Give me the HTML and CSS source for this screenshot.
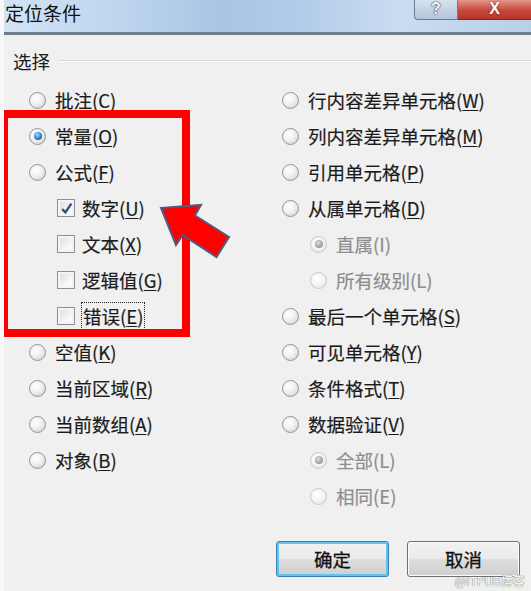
FILE: index.html
```html
<html>
    <head>
        <meta charset="UTF-8" name="viewport" content="width=device-width, initial-scale=1.0">
        <link rel="stylesheet" href="styles.css">
    </head>
    <body>
        <div class="dialog">
            <div class="tittel">
                <span class="tittel-tekst">定位条件</span>
                <div class="vindu-knapper">
                    <span class="hjelp">?</span>
                    <span class="lukk">X</span>
                </div>
            </div>

            <div class="gruppe">
                <div class="gruppe-navn"><span>选择</span></div>

                <div class="kolonner">
                    <div class="kolonne">
                        <div class="rad"><span class="radio"></span>批注(<u>C</u>)</div>
                        <div class="rad"><span class="radio valgt"></span>常量(<u>O</u>)</div>
                        <div class="rad"><span class="radio"></span>公式(<u>F</u>)</div>
                        <div class="rad under"><span class="boks">
                            <svg width="13" height="13" viewBox="0 0 12 12"><path d="M2 6.5 L5 9.5 L10.5 1.5" fill="none" stroke="#3b4f87" stroke-width="2.2"/></svg>
                        </span>数字(<u>U</u>)</div>
                        <div class="rad under"><span class="boks"></span>文本(<u>X</u>)</div>
                        <div class="rad under"><span class="boks"></span>逻辑值(<u>G</u>)</div>
                        <div class="rad under"><span class="boks"></span><span class="fokus">错误(<u>E</u>)</span></div>
                        <div class="rad"><span class="radio"></span>空值(<u>K</u>)</div>
                        <div class="rad"><span class="radio"></span>当前区域(<u>R</u>)</div>
                        <div class="rad"><span class="radio"></span>当前数组(<u>A</u>)</div>
                        <div class="rad"><span class="radio"></span>对象(<u>B</u>)</div>
                    </div>
                    <div class="kolonne">
                        <div class="rad"><span class="radio"></span>行内容差异单元格(<u>W</u>)</div>
                        <div class="rad"><span class="radio"></span>列内容差异单元格(<u>M</u>)</div>
                        <div class="rad"><span class="radio"></span>引用单元格(<u>P</u>)</div>
                        <div class="rad"><span class="radio"></span>从属单元格(<u>D</u>)</div>
                        <div class="rad under av"><span class="radio valgt"></span>直属(I)</div>
                        <div class="rad under av"><span class="radio"></span>所有级别(L)</div>
                        <div class="rad"><span class="radio"></span>最后一个单元格(<u>S</u>)</div>
                        <div class="rad"><span class="radio"></span>可见单元格(<u>Y</u>)</div>
                        <div class="rad"><span class="radio"></span>条件格式(<u>T</u>)</div>
                        <div class="rad"><span class="radio"></span>数据验证(<u>V</u>)</div>
                        <div class="rad under av"><span class="radio valgt"></span>全部(L)</div>
                        <div class="rad under av"><span class="radio"></span>相同(E)</div>
                    </div>
                </div>

                <div class="knapper">
                    <button class="knapp standard">确定</button>
                    <button class="knapp">取消</button>
                </div>
            </div>

            <!-- markering lagt over skjermbildet -->
            <div class="ramme"></div>
            <svg class="pil" width="531" height="591" viewBox="0 0 531 591">
                <polygon points="161,208 201,205 195,215.5 229,237 216.5,257 182.5,235 176,245" fill="#ff0000" stroke="#4e5a80" stroke-width="2" stroke-linejoin="miter"/>
            </svg>
            <span class="vannmerke">@ITPUB博客</span>
        </div>
    </body>
</html>
```

FILE: styles.css
```css
html, body {
    margin: 0;
    padding: 0;
}

body {
    font-family: "Noto Sans CJK SC", "Liberation Sans", sans-serif;
    color: #1b1b1b;
}

.dialog {
    position: relative;
    width: 531px;
    height: 591px;
    overflow: hidden;
    background: #f0f0f0;
    border-left: 4px solid #f8f8f8;
    box-sizing: border-box;
}

.tittel {
    height: 32px;
    margin-left: -4px;
    display: flex;
    justify-content: space-between;
    border-bottom: 3px solid #6f7c89;
    background: linear-gradient(90deg, #d3e3f5 0%, #c2d8ef 18%, #a9c5e5 42%, #b3cdea 58%, #cadcf1 75%, #b8cfea 100%);
}

.tittel-tekst {
    padding-left: 5px;
    height: 26px;
    line-height: 26px;
    font-size: 19px;
    color: #111;
}

.vindu-knapper {
    display: flex;
    align-items: flex-start;
}

.hjelp, .lukk {
    height: 19px;
    line-height: 18px;
    text-align: center;
    color: white;
    font-family: "Liberation Sans", sans-serif;
    font-weight: bold;
    font-size: 16px;
}

.hjelp {
    width: 42px;
    border: 1px solid #6b7c90;
    border-top: none;
    border-radius: 0 0 0 4px;
    background: linear-gradient(#d6e2ef, #b4c6da);
    color: #f4f6f8;
    text-shadow: 0 0 2px #30405a, 0 0 1px #30405a;
}

.lukk {
    width: 73px;
    border-bottom: 1px solid #7a2a22;
    background: linear-gradient(#e5978a, #c7483a 55%, #b83526);
    text-shadow: 0 0 2px #5a1a10;
}

.gruppe-navn {
    display: flex;
    align-items: center;
    margin: 13px 0 0 9px;
    height: 26px;
    font-size: 18.5px;
}

.gruppe-navn::after {
    content: "";
    flex: 1;
    margin-left: 8px;
    border-top: 1px solid #d3dbe0;
    border-bottom: 1px solid #ffffff;
}

.kolonner {
    display: grid;
    grid-template-columns: 253px 1fr;
    margin-top: 8px;
    padding-left: 25px;
}

.rad {
    height: 36px;
    display: flex;
    align-items: center;
    font-size: 18.5px;
    white-space: nowrap;
    -webkit-text-stroke: 0.2px #1b1b1b;
}

.rad u {
    text-underline-offset: 2px;
}

.rad.under {
    padding-left: 28px;
}

.rad.av {
    color: #8d8d8d;
    -webkit-text-stroke: 0.2px #8d8d8d;
}

.radio {
    width: 15px;
    height: 15px;
    border-radius: 50%;
    border: 1px solid #959595;
    background: radial-gradient(circle at 40% 35%, #ffffff 0%, #f0f0f0 45%, #c8c8c8 100%);
    margin-right: 9px;
    position: relative;
    flex-shrink: 0;
}

.radio.valgt::after {
    content: "";
    position: absolute;
    left: 3.5px;
    top: 3.5px;
    width: 8px;
    height: 8px;
    border-radius: 50%;
    background: radial-gradient(circle at 40% 35%, #a8dcff 0%, #2b7bd0 55%, #17468a 100%);
}

.av .radio {
    border-color: #c8c8c8;
    background: radial-gradient(circle at 40% 35%, #ffffff 0%, #f3f3f3 50%, #e0e0e0 100%);
}

.av .radio.valgt::after {
    background: radial-gradient(circle at 40% 35%, #dddddd 0%, #a0a0a0 60%, #888888 100%);
}

.boks {
    width: 16px;
    height: 16px;
    border: 1px solid #8e8f8f;
    background: linear-gradient(135deg, #d8d8d8, #f6f6f6 60%, #ffffff);
    box-shadow: inset 0 0 0 2px #f4f4f4;
    margin-right: 7px;
    display: flex;
    align-items: center;
    justify-content: center;
    flex-shrink: 0;
}

.fokus {
    outline: 1px dotted #222;
    outline-offset: 0;
    padding: 0 1px;
}

.knapper {
    display: flex;
    justify-content: flex-end;
    gap: 18px;
    margin-top: 27px;
    padding-right: 11px;
}

.knapp {
    width: 113px;
    height: 36px;
    font-family: "Noto Sans CJK SC", sans-serif;
    font-size: 18.5px;
    color: #111;
    -webkit-text-stroke: 0.3px #111;
    border: 1px solid #707070;
    border-radius: 3px;
    background: linear-gradient(#f2f2f2 0%, #ebebeb 48%, #dddddd 52%, #cfcfcf 100%);
    box-shadow: inset 0 0 0 1px #fbfbfb;
    padding: 0;
}

.standard {
    border: 1px solid #3c7fb1;
    box-shadow: inset 0 0 0 2px #62c3ee;
}

.ramme {
    position: absolute;
    left: -4px;
    top: 110px;
    width: 190px;
    height: 227px;
    border: 8px solid #ff0000;
    box-sizing: border-box;
}

.pil {
    position: absolute;
    left: -4px;
    top: 0;
}

.vannmerke {
    position: absolute;
    right: 6px;
    bottom: 2px;
    font-family: "Noto Sans CJK SC", sans-serif;
    font-size: 12px;
    color: #ffffff;
    text-shadow: 0 0 1px #777, 0 0 1px #777;
}
```
